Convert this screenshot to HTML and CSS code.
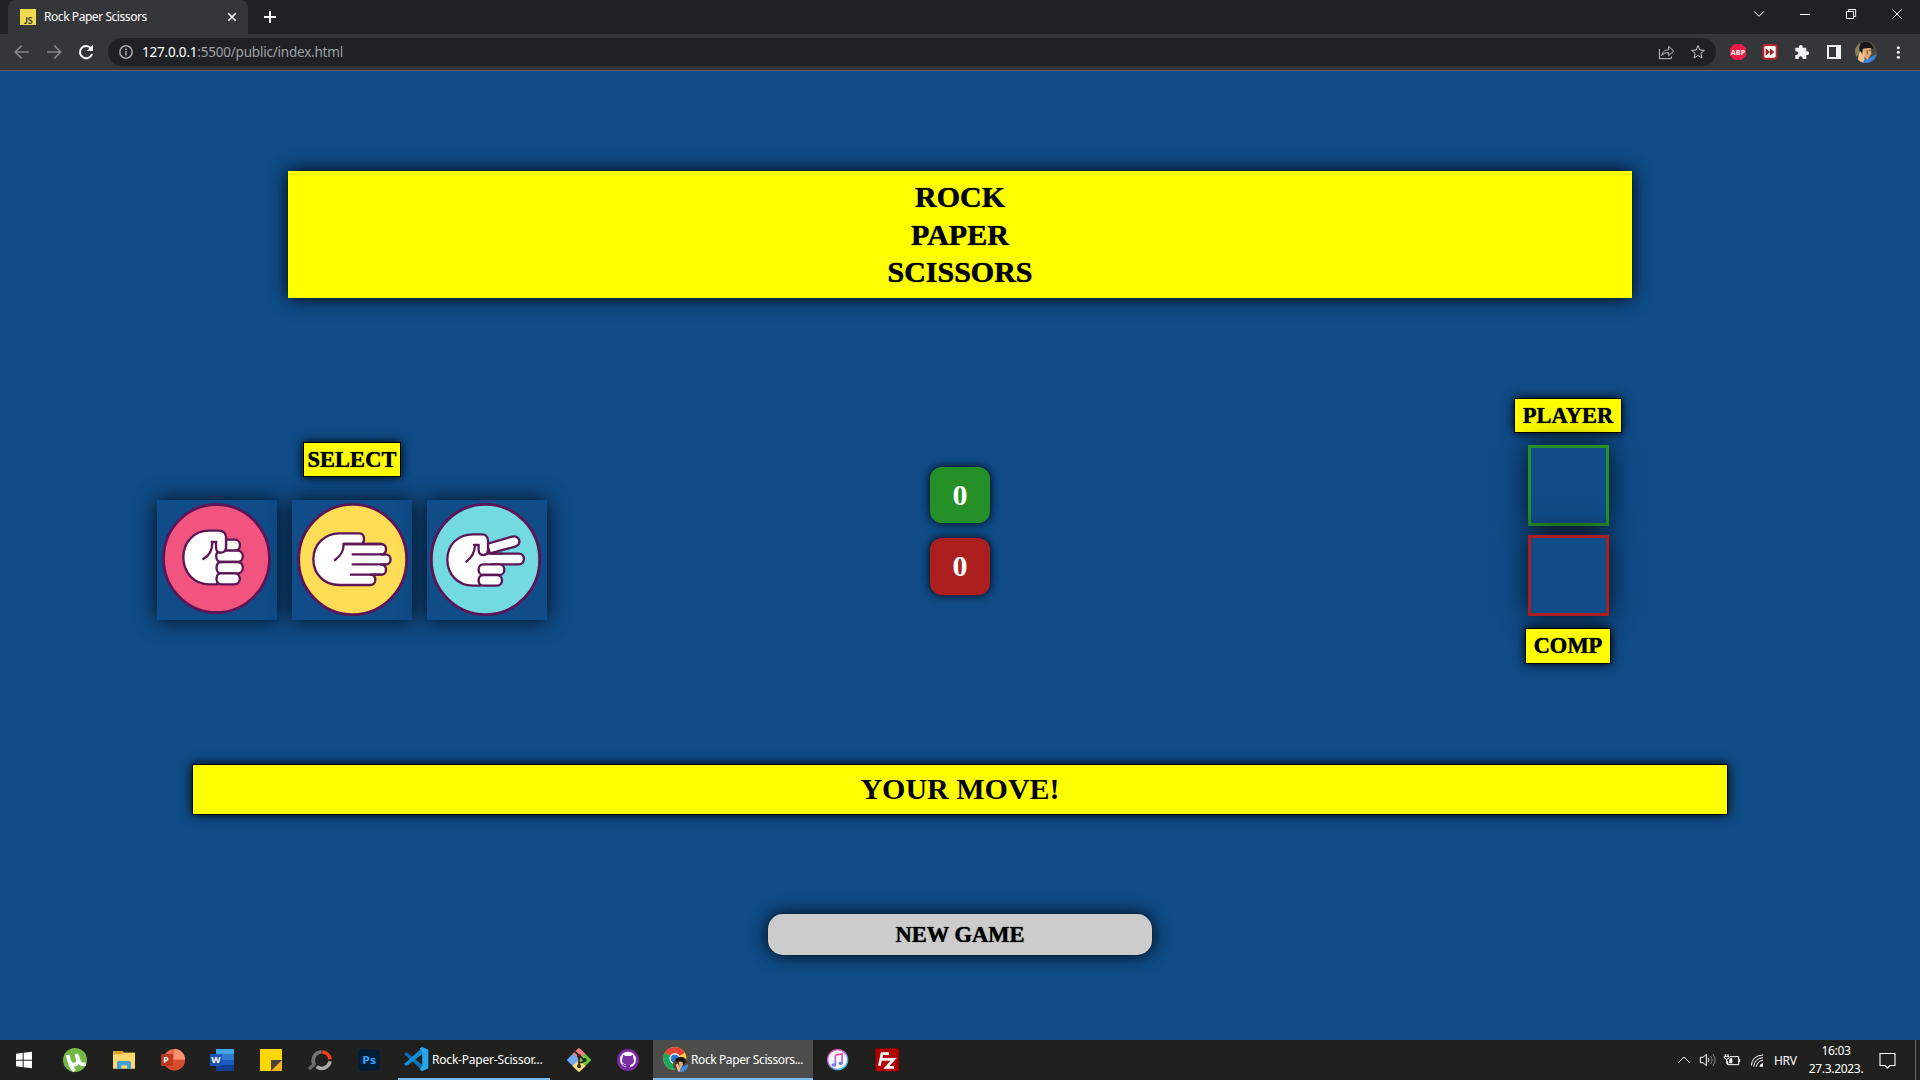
FILE: index.html
```html
<!DOCTYPE html>
<html lang="en">
<head>
<meta charset="utf-8">
<title>Rock Paper Scissors</title>
<link rel="stylesheet" href="styles.css">
</head>
<body>
<header class="browser">
  <div class="tabstrip">
    <div class="tab">
      <svg class="favicon" viewBox="0 0 16 16"><rect width="16" height="16" fill="#f0db4f"/><text x="4" y="14.6" font-size="9" font-weight="700" font-family="Lato, sans-serif" fill="#323330">JS</text></svg>
      <span class="tab-title">Rock Paper Scissors</span>
      <svg class="tab-close" viewBox="0 0 10 10"><path d="M1.3 1.3l7.4 7.4M8.7 1.3L1.3 8.7" stroke="#fff" stroke-width="1.6"/></svg>
    </div>
    <svg class="new-tab" viewBox="0 0 12 12"><path d="M6 0v12M0 6h12" stroke="#fff" stroke-width="2"/></svg>
    <svg class="window-controls" viewBox="50 0 600 102" fill="none" stroke="#fff">
      <path d="M152 34l15 15 15-15" stroke-width="3"/>
      <path d="M290 43.500h30" stroke-width="3"/>
      <path d="M429.500 34.500h21v21h-21zM436 34v-5.500h21v21h-6" stroke-width="3"/>
      <path d="M567 28l28 28M595 28l-28 28" stroke-width="3"/>
    </svg>
  </div>
  <div class="toolbar">
    <svg class="nav-icons" viewBox="0 102 324 108" fill="none" stroke-width="5">
      <path d="M87 156H48M65 137l-19 19 19 19M141 156h39M163 137l19 19-19 19" stroke="#85878a"/>
      <path d="M273 145a18.500 18.500 0 1 0 3 17" stroke="#fff" stroke-width="6"/>
      <path d="M279 134v19h-19z" fill="#fff"/>
    </svg>
    <div class="address">
      <svg class="info" viewBox="0 0 14 14" fill="none" stroke="#a4a7ab" stroke-width="1.500"><circle cx="7" cy="7" r="6.200"/><path d="M7 6v4.500M7 3.400v1.600"/></svg>
      <span class="url"><b>127.0.0.1</b>:5500/public/index.html</span>
      <svg class="address-actions" viewBox="102 114 186 84" fill="none" stroke="#c4c7c9" stroke-width="3">
        <path d="M118 147v29h36v-7"/><path d="M125 167c3-13 11-18 21-18v-10l15 14-15 14v-9c-9 0-15 1-21 9z"/>
        <path d="M234 137l5.500 13 14 1-11 9 3.500 14-12-7.500-12 7.500 3.500-14-11-9 14-1z"/>
      </svg>
    </div>
    <svg class="extensions" viewBox="300 102 600 108">
      <path d="M343 132h22l13 13v22l-13 13h-22l-13-13v-22z" fill="#ee1c43"/>
      <text x="354" y="164" text-anchor="middle" font-size="21" font-weight="700" font-family="Open Sans" textLength="43" lengthAdjust="spacingAndGlyphs" fill="#fff">ABP</text>
      <rect x="427" y="132" width="46" height="47" rx="7" fill="#b3262b"/><rect x="433" y="138" width="34" height="35" rx="4" fill="#fff"/><path d="M437 145l13 11-13 11zM450 145l13 11-13 11z" fill="#9c2024"/>
      <path d="M526 143h11c-3-11 14-11 11 0h11v11c11-3 11 14 0 11v12h-11c1-11-13-11-12 0h-10v-12c12 1 12-12 0-11z" fill="#f1f3f4"/>
      <path d="M621 135h42v42h-42z" fill="#f1f3f4"/><path d="M627 141h21v30h-21z" fill="#35363a"/>
      <clipPath id="face"><circle cx="738" cy="156" r="33"/></clipPath>
      <g clip-path="url(#face)"><path d="M700 120h80v80h-80z" fill="#51493c"/><path d="M702 145l18-15 10 25-22 15z" fill="#8a805c"/><path d="M743 176l30-16v34h-60l4-14z" fill="#3984d8"/><path d="M728 144h24l2 17-11 18-12-10z" fill="#e1aa75"/><path d="M718 151c-4-35 40-33 42-3l-8-5-24 3-2 12z" fill="#171717"/><path d="M718 158l4-3 5 9 2-12 4 1 1 23-8 18-13-13z" fill="#f0c391"/><path d="M742 150v13M747 151h5" stroke="#744a30" stroke-width="3"/></g>
      <g fill="#f1f3f4"><circle cx="835" cy="143" r="4.500"/><circle cx="835" cy="157" r="4.500"/><circle cx="835" cy="172" r="4.500"/></g>
    </svg>
  </div>
</header>

<main class="game">
  <h1 class="title">ROCK<br>PAPER<br>SCISSORS</h1>
  <section class="board">
    <div class="select">
      <h2 class="label label-select">SELECT</h2>
      <div class="choices">
        <svg class="choice" viewBox="51 210 360 360" stroke="#5c1557" stroke-width="7" stroke-linejoin="round" stroke-linecap="round">
          <ellipse cx="229.500" cy="385.500" rx="159" ry="162" fill="#f0547f" stroke-width="8.500"/>
          <g fill="#fff"><path d="M232 463h-24c-46 0-78-36-78-81s31-80 78-80h28c14 0 22 8 22 22l-15 50z"/>
          <path d="M258 329h26c21 0 21 33 0 33h-26z"/><path d="M242 362h50c22 0 22 34 0 34h-49c-19 0-19-34-1-34z"/><path d="M243 396h49c22 0 22 34 0 34h-49c-18 0-18-34 0-34z"/><path d="M243 430h40c22 0 22 33 0 33h-40c-18 0-18-33 0-33z"/></g>
          <path d="M228 337c0 20-1 31 14 31 13 0 16-6 16-16v-31l-20-12z" fill="#fff" stroke="none"/>
          <path d="M228 337c0 20-1 31 14 31 13 0 16-6 16-16v-31M215 336h14M217 338c0 25-10 39-27 49" fill="none"/>
        </svg>
        <svg class="choice" viewBox="456 210 360 360" stroke="#5c1557" stroke-width="7" stroke-linejoin="round" stroke-linecap="round">
          <ellipse cx="638" cy="388.500" rx="162" ry="165.500" fill="#ffdc55" stroke-width="8.500"/>
          <path d="M611 342h112c20 0 20 31 1 31h12c21 0 21 31 0 31h-12c19 0 19 30-1 30h-31c19 0 19 31-1 31H598c-46 0-78-33-78-78s35-77 78-77h59c17 0 18 19 11 31" fill="#fff"/>
          <path d="M611 342h112M638 373h96M638 403h96M633 434h89M611 342c0 24-10 36-26 48" fill="none"/>
        </svg>
        <svg class="choice" viewBox="861 210 360 360" stroke="#5c1557" stroke-width="7" stroke-linejoin="round" stroke-linecap="round">
          <ellipse cx="1036.500" cy="388.500" rx="162.500" ry="165.500" fill="#74dae1" stroke-width="8.500"/>
          <g fill="#fff"><path d="M1040 342l76-22c22-6 32 23 10 30l-76 20z"/><path d="M1047 371h89c21 0 21 32 0 32h-112z"/>
          <path d="M1020 467h-22c-44 0-76-34-76-78s31-76 76-76h28c11 0 18 8 18 20v38l-10 32z"/>
          <path d="M1030 403h48c20 0 20 32 0 32h-48c-19 0-19-32 0-32z"/><path d="M1030 435h41c20 0 20 32 0 32h-41c-19 0-19-32 0-32z"/></g>
          <path d="M1036 374h16v26h-20z" fill="#fff" stroke="none"/><path d="M1002 345h14c-1 21 0 30 14 30 9 0 14-6 14-14M1005 345c-1 25-11 39-26 50M1052 371h32" fill="none"/>
        </svg>
      </div>
    </div>
    <div class="scores"><div class="score win">0</div><div class="score loss">0</div></div>
    <div class="players">
      <h2 class="label label-player">PLAYER</h2>
      <div class="slot slot-player"></div>
      <div class="slot slot-comp"></div>
      <h2 class="label label-comp">COMP</h2>
    </div>
  </section>
  <p class="message">YOUR MOVE!</p>
  <button class="new-game">NEW GAME</button>
</main>

<footer class="taskbar">
  <svg class="app start" viewBox="0 12 150 120"><path d="M48 53l20-3v21H48zM71 50l25-3v24H71zM48 74h20v20l-20-3zM71 74h25v23l-25-3z" fill="#fff"/></svg>
  <svg class="app" viewBox="150 12 147 120"><circle cx="225" cy="72" r="36" fill="#73b843"/><path d="M203 57c3 15 7 32 21 29 14-3 10-15 5-32M232 60c4 18 8 29 25 24M208 76c7 22 12 25 16 29" fill="none" stroke="#fff" stroke-width="11"/></svg>
  <svg class="app" viewBox="297 12 147 120"><path d="M339 45h29l5 5h30v15h-64z" fill="#dda020"/><path d="M339 55h25l6-5h35v48h-66z" fill="#ffd76b"/><path d="M351 99V80q0-5 5-5h32q5 0 5 5v19h-12V88h-17v11z" fill="#3da0df"/></svg>
  <svg class="app" viewBox="444 12 147 120"><circle cx="523" cy="71" r="32" fill="#ec6b49"/><path d="M523 39a32 32 0 0 1 32 32h-32z" fill="#ff9472"/><path d="M491 71h64a32 32 0 0 1-64 0z" fill="#d54b2e"/><rect x="483" y="54" width="36" height="36" rx="3" fill="#bd381e"/><text x="490" y="82" fill="#fff" font-size="26" font-weight="700" font-family="Open Sans">P</text></svg>
  <svg class="app" viewBox="591 12 147 120"><path d="M648 39h54v17h-54z" fill="#42a5ee"/><path d="M648 56h54v16h-54z" fill="#2b7cd3"/><path d="M648 72h54v16h-54z" fill="#1b5cbe"/><path d="M648 88h54v17h-54z" fill="#123f94"/><rect x="630" y="54" width="36" height="36" rx="3" fill="#1854b3"/><text x="634" y="81" fill="#fff" font-size="26" font-weight="700" font-family="Open Sans" textLength="28" lengthAdjust="spacingAndGlyphs">W</text></svg>
  <svg class="app" viewBox="738 12 147 120"><path d="M780 39h66v66h-66z" fill="#ffd800"/><path d="M813 105l33-33v33z" fill="#f8b51b"/><path d="M813 72h33l-33 33z" fill="#46423b"/></svg>
  <svg class="app" viewBox="885 12 147 120" fill="none" stroke-width="11"><path d="M965 48a25 25 0 0 0-21 39" stroke="#747474"/><path d="M967 48a25 25 0 0 1 23 22" stroke="#ff3c1c"/><path d="M990 76a25 25 0 0 1-40 16" stroke="#aaa"/><path d="M944 84l-17 15" stroke="#666"/></svg>
  <svg class="app" viewBox="1032 12 147 120"><rect x="1074" y="40" width="65" height="64" rx="11" fill="#001e36"/><text x="1087" y="83" fill="#31a8ff" font-size="34" font-weight="700" font-family="Open Sans" textLength="41" lengthAdjust="spacingAndGlyphs">Ps</text></svg>
  <div class="window window-code">
    <svg class="window-icon" viewBox="1209 36 77 77"><path d="M1212 57l8-5 48 38v17z" fill="#0b70b9"/><path d="M1212 86l8 6 48-37V37z" fill="#168bd2"/><path d="M1266 36l18 8v55l-18 9-8-5 8-11V51l-8-11z" fill="#29a5ef"/></svg>
    <span class="window-name">Rock-Paper-Scissor...</span>
  </div>
  <svg class="app git" viewBox="222 12 147 120"><path d="M297 35l20 19-20 19-20-19z" fill="#f47d7c"/><path d="M279 53l19 19-19 19-19-19z" fill="#6eaaf5"/><path d="M315 53l19 19-19 19-19-19z" fill="#6cc644"/><path d="M297 71l20 19-20 19-20-19z" fill="#ffdf76"/><path d="M285 47l12 12v33M299 60l15 13M297 80c9 0 15-3 17-9" stroke="#252520" stroke-width="5" fill="none"/><g fill="#252520"><circle cx="297" cy="60" r="6"/><circle cx="314" cy="72" r="6"/><circle cx="297" cy="91" r="6"/></g></svg>
  <svg class="app" viewBox="369 12 147 120"><circle cx="444" cy="72" r="33" fill="#7b2ea2"/><circle cx="444" cy="71" r="24" fill="#fff"/><path d="M429 56l8 4h14l8-4 1 10c6 15-4 20-10 21v10h-12v-6c-9 2-8-6-13-7 6-2 6 4 13 2v-1c-7-1-16-6-10-20z" fill="#7b2ea2"/></svg>
  <div class="window window-chrome">
    <svg class="window-icon" viewBox="549 36 81 81"><circle cx="586" cy="72" r="36" fill="#ffce38"/><path d="M586 72L555 54a36 36 0 0 1 62 0z" fill="#e94335"/><path d="M586 72l-31-18a36 36 0 0 0 31 54z" fill="#1ba55b"/><circle cx="586" cy="72" r="17" fill="#fff"/><circle cx="586" cy="72" r="13" fill="#2879df"/><clipPath id="mini"><circle cx="604" cy="90" r="24"/></clipPath><g clip-path="url(#mini)"><path d="M580 66h50v50h-50z" fill="#544633"/><path d="M588 80c0-20 32-18 31 5l-10 12z" fill="#161412"/><path d="M597 82h13l1 10-8 13z" fill="#e1aa75"/><path d="M606 99l22-10v30h-32z" fill="#3b88df"/><path d="M589 91l6-3 9 17-6 12z" fill="#f2c18f"/></g></svg>
    <span class="window-name">Rock Paper Scissors...</span>
  </div>
  <svg class="app" viewBox="999 12 147 120"><defs><linearGradient id="ring" x2=".7" y2="1"><stop stop-color="#ff549b"/><stop offset=".5" stop-color="#b16af5"/><stop offset="1" stop-color="#31c8f7"/></linearGradient><linearGradient id="note" x2="0" y2="1"><stop stop-color="#fb4fa3"/><stop offset="1" stop-color="#5787f5"/></linearGradient></defs><circle cx="1073" cy="71" r="30" fill="#f8f6fb" stroke="url(#ring)" stroke-width="4"/><path d="M1066 86V58l20-5v28" fill="none" stroke="url(#note)" stroke-width="5"/><ellipse cx="1062" cy="87" rx="7" ry="5" fill="#7779ef"/><ellipse cx="1082" cy="82" rx="7" ry="5" fill="#667fed"/></svg>
  <svg class="app" viewBox="1146 12 147 120"><path d="M1187 38h69v67h-69z" fill="#b40000" stroke="#900" stroke-width="3" stroke-dasharray="4 3"/><path d="M1227 53h-21l-8 36M1202 70h17M1214 70h27l-22 24h23" fill="none" stroke="#fff" stroke-width="8"/></svg>
  <div class="tray">
    <svg class="tray-icons" viewBox="105 12 285 120" fill="none" stroke="#fff" stroke-width="3"><path d="M115 80l17-17 17 17"/><path d="M181 64h8l10-9v34l-10-9h-8zM204 65q6 7 0 14"/><path d="M211 60q11 12 0 24M218 54q15 18 0 36" stroke="#888"/><path d="M270 62h26v24h-33v-11M299 69v9"/><path d="M269 67h8v15h-10z" fill="#fff" stroke="none"/><path d="M256 54v6M264 54v6M253 61h14v5q-7 9-14 0zM260 70v13h5"/><path d="M334 89q2-30 35-32M341 92q3-25 28-27M349 92q3-17 20-19"/><path d="M358 92q2-9 11-11v11z" fill="#fff" stroke="none"/></svg>
    <span class="lang">HRV</span>
    <div class="clock"><span>16:03</span><span>27.3.2023.</span></div>
    <svg class="notify" viewBox="0 0 17 17" fill="none" stroke="#fff" stroke-width="1.100"><path d="M1 1.500h15v12h-5l-2.500 2.500-2.500-2.500H1z"/></svg>
    <div class="show-desktop"></div>
  </div>
</footer>
</body>
</html>
```
FILE: styles.css
```css
* { box-sizing: border-box; }
body { margin: 0; width: 1920px; height: 1080px; overflow: hidden; display: flex; flex-direction: column; background: #0f4c88; font-family: "Noto Sans", sans-serif; }
svg { display: block; flex: none; }

.browser { height: 71px; background: #35363a; border-bottom: 1px solid #5c5d60; color: #fff; }
.tabstrip { display: flex; align-items: center; height: 34px; background: #202124; }
.tab { display: flex; align-items: center; width: 240px; height: 34px; margin-left: 8px; padding: 0 11px 0 12px; background: #35363a; border-radius: 8px 8px 0 0; }
.favicon { width: 16px; height: 16px; }
.tab-title { margin-left: 8px; padding-bottom: 1px; flex: 1; font-size: 12px; line-height: 16px; letter-spacing: -.44px; white-space: nowrap; }
.tab-close { width: 10px; height: 10px; }
.new-tab { width: 12px; height: 12px; margin-left: 16px; }
.window-controls { width: 200px; height: 34px; margin-left: auto; }
.toolbar { display: flex; align-items: center; height: 36px; }
.nav-icons { width: 108px; height: 36px; }
.address { display: flex; align-items: center; width: 1608px; height: 28px; padding-left: 11px; border-radius: 14px; background: #202124; }
.info { width: 14px; height: 14px; }
.url { flex: 1; margin-left: 9px; color: #9aa0a6; font-size: 13.5px; letter-spacing: -.21px; white-space: nowrap; }
.url b { color: #fff; font-weight: 400; }
.address-actions { width: 62px; height: 28px; }
.extensions { width: 200px; height: 36px; margin-left: 4px; }

.game { flex: 1; display: flex; flex-direction: column; align-items: center; padding-top: 100px; color: #000; font-family: "Liberation Serif", serif; }
.title { width: 1344px; height: 127px; margin: 0 0 100px; padding-top: 7px; background: #ff0; box-shadow: 0 0 17px #000; font-size: 30px; line-height: 37.5px; text-align: center; text-shadow: 0 0 1px #000; }
.board { display: grid; grid-template-columns: repeat(3, 608px); align-items: center; height: 266px; margin-bottom: 100px; }
.select, .scores, .players { display: flex; flex-direction: column; align-items: center; }
.label { margin: 0; border: 1px solid #000; background: #ff0; box-shadow: 0 0 10px #000; font-size: 22.5px; line-height: 33px; height: 35px; text-align: center; text-shadow: 0 0 1px #000; }
.label-select { width: 98px; margin-bottom: 23px; }
.choices { display: flex; gap: 15px; }
.choice { width: 120px; height: 120px; background: #0f4c88; box-shadow: 0 0 20px rgba(0, 0, 0, .85); }
.scores { gap: 15px; padding-bottom: 1px; }
.score { width: 60px; height: 57px; border-radius: 12px; box-shadow: 0 0 10px #000; color: #fff; font-size: 30px; font-weight: 700; line-height: 56px; text-align: center; }
.win { height: 56px; background: #259025; }
.loss { background: #ad1f1f; }
.label-player { width: 108px; margin-bottom: 12px; }
.slot { width: 81px; height: 81px; border: 3px solid; background: #0f4c88; box-shadow: 0 0 26px rgba(0, 0, 0, .8); }
.slot-player { border-color: #259025; margin-bottom: 9px; }
.slot-comp { border-color: #ad1f1f; margin-bottom: 12px; }
.label-comp { width: 86px; height: 36px; }
.message { width: 1536px; height: 51px; margin: 0 0 99px; border: 1px solid #000; background: #ff0; box-shadow: 0 0 10px #000; font-size: 30px; font-weight: 700; line-height: 47px; text-align: center; }
.new-game { width: 384px; height: 41px; padding: 0; border: 0; border-radius: 15px; background: #ccc; box-shadow: 0 0 18px #000; color: #000; font: 700 22.5px/41px "Liberation Serif", serif; text-shadow: 0 0 1px #000; }

.taskbar { display: flex; height: 40px; background: #20211e; color: #fff; font-size: 12px; }
.app { width: 49px; height: 40px; }
.start { width: 50px; }
.window { display: flex; align-items: center; height: 40px; border-bottom: 2px solid #76b9ed; white-space: nowrap; }
.window-code { width: 152px; margin-left: 5px; padding-left: 5px; }
.window-icon { width: 26px; height: 26px; margin-top: 2px; }
.window-chrome { width: 160px; margin-left: 1px; padding-left: 10px; background: #4c4d4b; }
.window-name { margin-left: 3px; letter-spacing: -.2px; }
.window-chrome .window-name { margin-left: 2px; letter-spacing: -.4px; }
.git { margin-left: 4px; }
.tray { display: flex; align-items: center; margin-left: auto; letter-spacing: -.3px; }
.tray-icons { width: 95px; height: 40px; }
.lang { width: 27px; margin-left: 4px; }
.clock { display: flex; flex-direction: column; align-items: center; width: 52px; margin-left: 9px; line-height: 18px; white-space: nowrap; }
.notify { width: 17px; height: 17px; margin-left: 17px; }
.show-desktop { width: 5px; height: 40px; margin-left: 19px; border-left: 1px solid #6b6b6a; }
```
